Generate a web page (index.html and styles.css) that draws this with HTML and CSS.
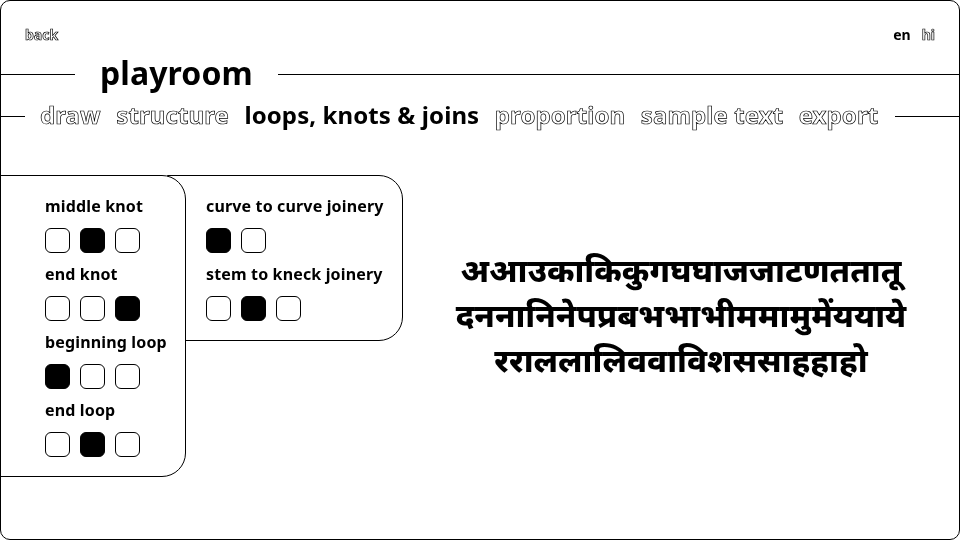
FILE: index.html
```html
<!DOCTYPE html>
<html lang="en">
<head>
    <meta charset="UTF-8">
    <title>playroom</title>
    <link rel="stylesheet" href="styles.css">
</head>
<body>
    <div class="frame">
        <div class="topbar">
            <a class="outline">back</a>
            <div class="lang">
                <a>en</a>
                <a class="outline">hi</a>
            </div>
        </div>

        <div class="title-row">
            <span class="rule rule-title-left"></span>
            <h1>playroom</h1>
            <span class="rule rule-fill"></span>
        </div>

        <div class="nav-row">
            <span class="rule rule-nav-left"></span>
            <nav class="tabs">
                <a class="outline">draw</a>
                <a class="outline">structure</a>
                <a>loops, knots &amp; joins</a>
                <a class="outline">proportion</a>
                <a class="outline">sample text</a>
                <a class="outline">export</a>
            </nav>
            <span class="rule rule-fill"></span>
        </div>

        <div class="content">
            <div class="panel panel-main">
                <div class="option">
                    <h3>middle knot</h3>
                    <div class="boxes"><span class="box"></span><span class="box on"></span><span class="box"></span></div>
                </div>
                <div class="option">
                    <h3>end knot</h3>
                    <div class="boxes"><span class="box"></span><span class="box"></span><span class="box on"></span></div>
                </div>
                <div class="option">
                    <h3>beginning loop</h3>
                    <div class="boxes"><span class="box on"></span><span class="box"></span><span class="box"></span></div>
                </div>
                <div class="option">
                    <h3>end loop</h3>
                    <div class="boxes"><span class="box"></span><span class="box on"></span><span class="box"></span></div>
                </div>
            </div>
            <div class="panel panel-side">
                <div class="option">
                    <h3>curve to curve joinery</h3>
                    <div class="boxes"><span class="box on"></span><span class="box"></span></div>
                </div>
                <div class="option">
                    <h3>stem to kneck joinery</h3>
                    <div class="boxes"><span class="box"></span><span class="box on"></span><span class="box"></span></div>
                </div>
            </div>
            <p class="sample">अआउकाकिकुगघघाजजाटणततातू<br>दननानिनेपप्रबभभाभीममामुमेंययाये<br>रराललालिववाविशससाहहाहो</p>
        </div>
    </div>
</body>
</html>
```

FILE: styles.css
```css
* {
    box-sizing: border-box;
}

html, body {
    margin: 0;
    height: 540px;
    overflow: hidden;
    background-color: #fff;
}

body {
    color: #000;
    font-family: 'Noto Sans', 'Open Sans', sans-serif;
    font-weight: 700;
}

.frame {
    height: 540px;
    border: 1px solid #000;
    border-radius: 10px;
    overflow: hidden;
    will-change: transform;
}

.outline {
    color: #fff;
    -webkit-text-stroke: 0.7px #000;
}

.topbar {
    display: flex;
    justify-content: space-between;
    padding: 24px 24px 0;
    height: 50px;
    font-size: 14px;
    line-height: 20px;
}

.lang {
    display: flex;
    gap: 11px;
}

.rule {
    display: block;
    height: 1px;
    background-color: #000;
}

.rule-fill {
    flex: 1;
}

.title-row {
    display: flex;
    align-items: center;
    height: 46px;
}

.rule-title-left {
    width: 74px;
}

h1 {
    margin: -2px 25px 0;
    font-size: 32px;
    letter-spacing: 0.1px;
    line-height: 46px;
    font-weight: 700;
}

.nav-row {
    display: flex;
    align-items: center;
    height: 38px;
}

.rule-nav-left {
    width: 24px;
}

.tabs {
    display: flex;
    gap: 15.5px;
    margin: -2px 17px 0 15px;
    font-size: 24px;
    letter-spacing: 0.1px;
    line-height: 40px;
}

.content {
    display: flex;
    align-items: flex-start;
    margin-top: 40px;
}

.panel {
    border: 1px solid #000;
    background-color: #fff;
    padding-top: 19px;
}

.panel-main {
    position: relative;
    z-index: 1;
    width: 186px;
    height: 302px;
    margin-left: -1px;
    padding-left: 44px;
    border-radius: 0 24px 24px 0;
}

.panel-side {
    width: 236px;
    height: 166px;
    margin-left: -19px;
    padding-left: 38px;
    border-radius: 0 24px 24px 0;
}

.option {
    height: 68px;
}

h3 {
    margin: 0;
    font-size: 16px;
    letter-spacing: 0.15px;
    line-height: 22px;
    font-weight: 700;
    white-space: nowrap;
}

.boxes {
    display: flex;
    gap: 10px;
    margin-top: 11px;
}

.box {
    width: 25px;
    height: 25px;
    border: 1px solid #000;
    border-radius: 6px;
}

.box.on {
    background-color: #000;
}

.sample {
    flex: 1;
    margin: 72px 0 0;
    text-align: center;
    font-size: 32.5px;
    line-height: 45px;
    font-weight: 800;
    white-space: nowrap;
}
```
